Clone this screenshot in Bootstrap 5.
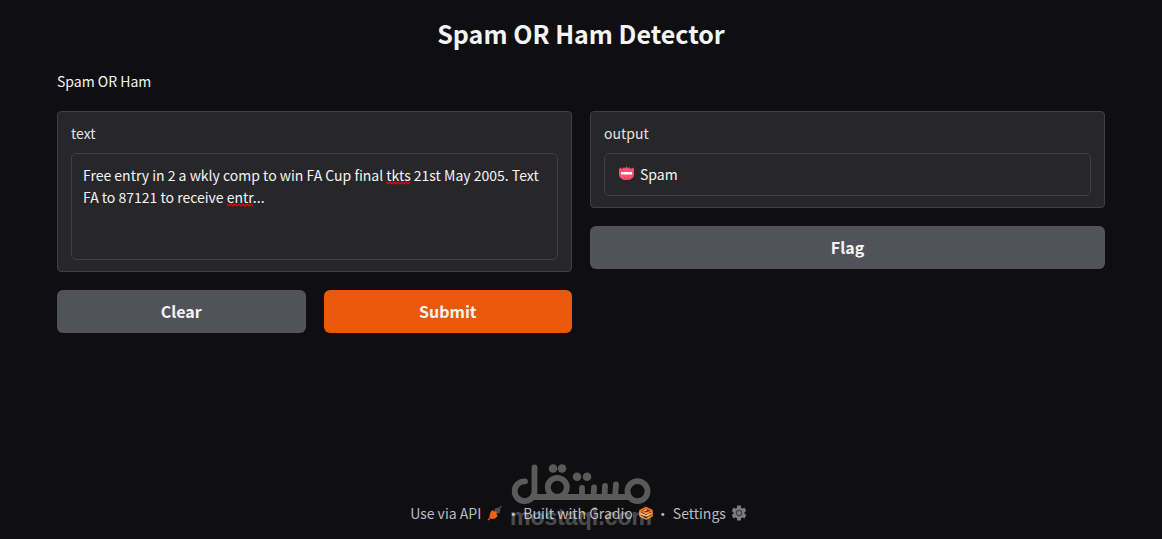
<!DOCTYPE html>
<html lang="en">
<head>
<meta charset="utf-8">
<meta name="viewport" content="width=device-width, initial-scale=1">
<title>Spam OR Ham Detector</title>
<link href="https://cdn.jsdelivr.net/npm/bootstrap@5.3.0/dist/css/bootstrap.min.css" rel="stylesheet">
<style>
  body { background: #0f0f11; color: #f4f4f5; font-family: "Noto Sans CJK SC", "Source Sans Pro", sans-serif; font-size: 14px; line-height: 22px; }
  .app-main { padding: 16px 57px 0; }
  .app-title { font-size: 25px; line-height: 34px; font-weight: 700; margin-bottom: 20px; }
  .app-desc { margin-bottom: 19px; }
  .app-grid { --bs-gutter-x: 18px; --bs-gutter-y: 18px; }
  .panel { background: #27272a; border: 1px solid #3f3f46; border-radius: 4px; padding: 10px 13px 11px; }
  .panel label { color: #e4e4e7; margin-bottom: 9px; }
  .panel .form-control { background: #27272a; border: 1px solid #3f3f46; border-radius: 5px; color: #f4f4f5; font-size: 14px; line-height: 22px; padding: 10px 11px; resize: none; overflow: hidden; box-shadow: none; }
  .panel textarea.form-control { height: 107px; }
  .panel input.form-control { height: 43px; padding: 8px 11px 10px 35px; }
  .spell { position: absolute; height: 4px; fill: none; stroke: #f00; stroke-width: 1.2; }
  .spell-tkts { left: 315px; top: 28px; width: 25px; }
  .spell-entr { left: 156px; top: 50px; width: 26px; }
  .verdict { position: absolute; left: 14px; top: 13px; }
  .action { border: 0; border-radius: 6px; height: 43px; padding: 0 0 2px; font-size: 16px; line-height: 24px; font-weight: 700; color: #f4f4f5; background: #52525b; }
  .action:hover { color: #fff; background: #5f5f69; }
  .action-primary, .action-primary:hover { background: #ea580c; }
  .action-flag { margin-top: 18px; }
  .app-footer { color: #bbbbc0; padding: 0 6px 15px 0; }
  .app-footer a, .app-footer button { color: inherit; text-decoration: none; border: 0; padding: 0; background: none; display: flex; align-items: center; gap: 6px; }
  .app-footer .divider { width: 20px; text-align: center; }
  .watermark { position: absolute; left: 0; right: 0; bottom: 10px; color: #fff; pointer-events: none; }
  .watermark-logo { opacity: .31; }
  .watermark-domain { font: 700 23px/24px "Liberation Sans", Arial, sans-serif; opacity: .25; }
</style>
</head>
<body class="min-vh-100 d-flex flex-column position-relative">
<main class="app-main flex-grow-1">
  <h1 class="app-title text-center">Spam OR Ham Detector</h1>
  <p class="app-desc">Spam OR Ham</p>
  <div class="row app-grid">
    <div class="col-6">
      <div class="panel">
        <label for="message" class="d-block">text</label>
        <div class="position-relative">
          <textarea id="message" class="form-control d-block" spellcheck="false">Free entry in 2 a wkly comp to win FA Cup final tkts 21st May 2005. Text FA to 87121 to receive entr...</textarea>
          <svg class="spell spell-tkts" viewBox="0 0 25 4" aria-hidden="true"><path d="M0 1l2 2 2-2 2 2 2-2 2 2 2-2 2 2 2-2 2 2 2-2 2 2 2-2"/></svg>
          <svg class="spell spell-entr" viewBox="0 0 26 4" aria-hidden="true"><path d="M0 1l2 2 2-2 2 2 2-2 2 2 2-2 2 2 2-2 2 2 2-2 2 2 2-2 2 2"/></svg>
        </div>
      </div>
      <div class="row app-grid mt-0">
        <div class="col-6"><button type="button" class="btn action w-100">Clear</button></div>
        <div class="col-6"><button type="button" class="btn action action-primary w-100">Submit</button></div>
      </div>
    </div>
    <div class="col-6">
      <div class="panel">
        <label for="result" class="d-block">output</label>
        <div class="position-relative">
          <input id="result" class="form-control" type="text" value="Spam" readonly>
          <svg class="verdict" width="17" height="15" viewBox="0 0 17 15" aria-hidden="true">
            <path fill="#fa4f73" d="M1 3l1.500-1.500L4 3l2-2 1 1.500L8.500.5 10 2.500l1-1.500 2 2 1.500-1.500L16 3v5c0 4-3.500 6-7.500 6S1 12 1 8z"/>
            <rect x="3" y="6" width="11" height="2.500" fill="#fff"/>
            <path d="M6 12h1.500M9.500 12H11M8 13.500h1" stroke="#b45309"/>
          </svg>
        </div>
      </div>
      <button type="button" class="btn action action-flag w-100">Flag</button>
    </div>
  </div>
</main>
<footer class="app-footer d-flex justify-content-center align-items-center">
  <a href="#">Use via API
    <svg width="16" height="16" viewBox="0 0 16 16" aria-hidden="true">
      <path d="M11 4.500l3.500-3.500" stroke="#4b4c54" stroke-width="1.300"/>
      <path d="M7 5l2-2 3-.5 1.500 1.500-.5 3.500L11 9z" fill="#4b4c54"/>
      <path d="M1 15l3-3" stroke="#ea580c" stroke-width="1.500"/>
      <path d="M4 6.500L5.500 5 7 6.500 8.500 6l1.500 2-.5 1.500L11 11l-1.500 1-1.500 1.500-3.500.5L2.500 12 3 8.500z" fill="#f4600c"/>
    </svg>
  </a>
  <span class="divider">·</span>
  <a href="#">Built with Gradio
    <svg width="14" height="15" viewBox="0 0 14 15" fill="none" stroke-width="1.600" stroke-linejoin="round" aria-hidden="true">
      <path d="M1 4.500L7 1.500l6 3L7 7.500z" stroke="#f97316" fill="#7c2d12"/>
      <path d="M4.500 5L8 3.500" stroke="#ffb366"/>
      <path d="M1 7l6 3 6-3" stroke="#ffb366"/>
      <path d="M1 5v5l6 3 6-3V5" stroke="#ff7a1a"/>
    </svg>
  </a>
  <span class="divider">·</span>
  <button type="button">Settings
    <svg width="14" height="16" viewBox="0 0 14 16" aria-hidden="true">
      <g stroke="#7c7c80" stroke-width="4"><path d="M7 .5v15M.6 4.300l12.800 7.400M13.400 4.300L.6 11.700"/></g>
      <circle cx="7" cy="8" r="5.600" fill="#7c7c80"/>
      <circle cx="7" cy="8" r="2.600" fill="none" stroke="#3f3f43" stroke-width="1.200"/>
    </svg>
  </button>
</footer>
<div class="watermark d-flex flex-column align-items-center">
  <svg class="watermark-logo" width="140" height="41" viewBox="0 0 140 41" role="img" aria-label="مستقل" fill="none" stroke="currentColor" stroke-width="5.800" stroke-linecap="round">
    <path d="M14 17.300A9.900 9.900 0 1 0 23.500 27V3.300M23 33H118"/>
    <circle cx="46.300" cy="23.300" r="9.500"/>
    <circle cx="126.500" cy="27.200" r="10"/>
    <path d="M71 33V24M82.500 33l.5-9.500M93.500 33l.5-11M104 33l1-12.500"/>
    <g fill="currentColor" stroke="none"><circle cx="42" cy="4.500" r="4.300"/><circle cx="51" cy="4.500" r="4.300"/><circle cx="66" cy="12.700" r="4.300"/><circle cx="76" cy="12.700" r="4.300"/></g>
  </svg>
  <span class="watermark-domain">mostaql.com</span>
</div>
<script src="https://cdn.jsdelivr.net/npm/bootstrap@5.3.0/dist/js/bootstrap.bundle.min.js"></script>
</body>
</html>
